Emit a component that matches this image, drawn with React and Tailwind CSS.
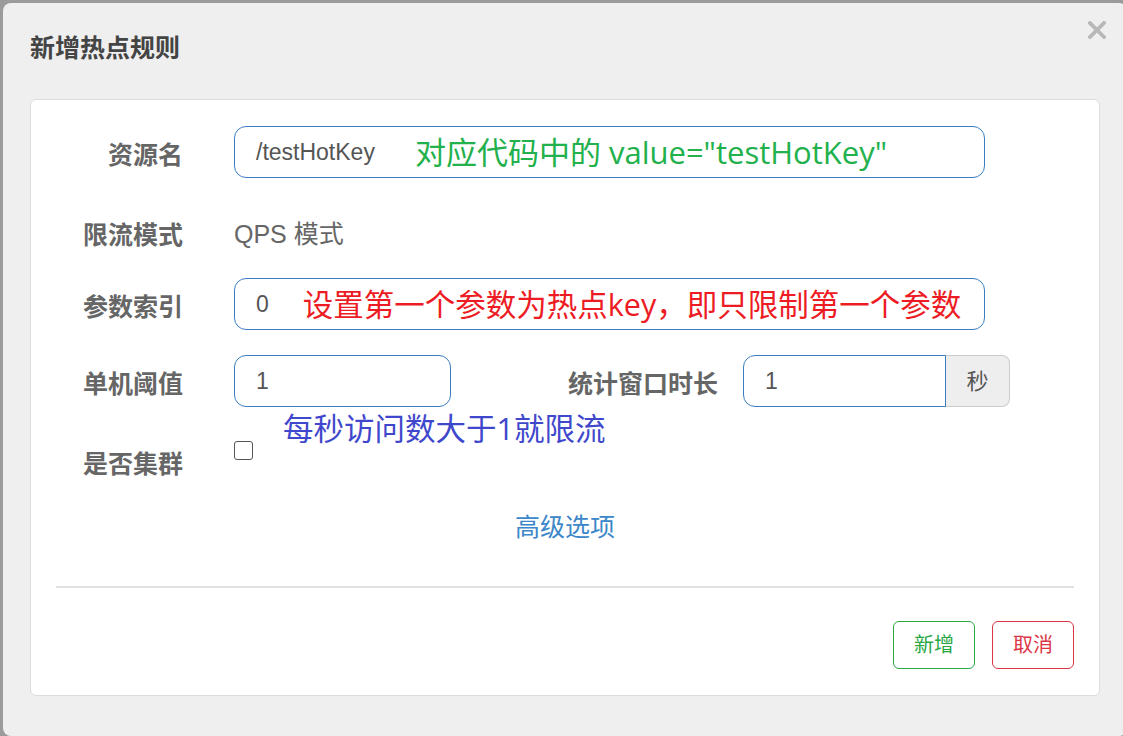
import React from 'react';

const cjk = { fontFamily: '"Liberation Sans", "Noto Sans CJK SC", sans-serif' };
const note = { fontFamily: '"Open Sans", "Noto Sans CJK SC", sans-serif' };

const Label = ({ children, className = '' }) => (
  <div className={`w-[152px] shrink-0 text-right text-[25px] font-bold text-[#666] leading-[32px] ${className}`}>
    {children}
  </div>
);

const Field = ({ value, children, className = '' }) => (
  <div className={`h-[52px] flex items-center border border-[#3a7dc0] rounded-[12px] bg-white pl-[21px] ${className}`}>
    <span className="text-[23px] text-[#555]">{value}</span>
    {children}
  </div>
);

const App = () => {
  return (
    <div className="h-[736px] w-[1123px] overflow-hidden bg-[#9b9b9b] pt-[3px] pl-[3px]" style={cjk}>
      <div className="h-[733px] w-[1124px] rounded-lg bg-[#efefef]">
        <div className="h-[96px] flex justify-between items-start pl-[27px] pr-[21px]">
          <h4 className="pt-[29px] text-[25px] leading-[32px] font-bold text-[#444]">新增热点规则</h4>
          <button className="mt-[18px] w-[18px] h-[18px] text-[#b8b8b8]">
            <svg viewBox="0 0 18 18" width="18" height="18">
              <path d="M2 2 L16 16 M16 2 L2 16" stroke="currentColor" strokeWidth="3.8" strokeLinecap="square" />
            </svg>
          </button>
        </div>

        <div className="ml-[27px] w-[1070px] h-[597px] bg-white border border-[#dcdcdc] rounded-md pt-[26px] flex flex-col">
          {/* 资源名 */}
          <div className="flex items-center h-[52px]">
            <Label className="pt-[6px]">资源名</Label>
            <Field value="/testHotKey" className="ml-[51px] w-[751px]">
              <span className="ml-[40px] text-[31px] text-[#22b14c] leading-none" style={note}>
                对应代码中的 value="testHotKey"
              </span>
            </Field>
          </div>

          {/* 限流模式 */}
          <div className="flex items-center h-[52px] mt-[31px]">
            <Label>限流模式</Label>
            <div className="ml-[51px] text-[25px] text-[#666]">QPS 模式</div>
          </div>

          {/* 参数索引 */}
          <div className="flex items-center h-[52px] mt-[17px]">
            <Label className="pt-[6px]">参数索引</Label>
            <Field value="0" className="ml-[51px] w-[751px]">
              <span className="ml-[34px] text-[30.5px] text-[#ed1c24] leading-none" style={note}>
                设置第一个参数为热点key，即只限制第一个参数
              </span>
            </Field>
          </div>

          {/* 单机阈值 / 统计窗口时长 */}
          <div className="flex items-center h-[52px] mt-[25px]">
            <Label className="pt-[6px]">单机阈值</Label>
            <Field value="1" className="ml-[51px] w-[217px]" />
            <div className="ml-[116px] w-[151px] text-right text-[25px] font-bold text-[#666] leading-[32px] pt-[6px]">
              统计窗口时长
            </div>
            <div className="ml-[25px] flex h-[52px]">
              <div className="w-[203px] h-full flex items-center border border-[#3a7dc0] rounded-l-[12px] pl-[21px] text-[23px] text-[#555]">
                1
              </div>
              <div className="w-[64px] h-full flex items-center justify-center bg-[#eeeeee] border border-l-0 border-[#cccccc] rounded-r-[8px] text-[22px] text-[#555]">
                秒
              </div>
            </div>
          </div>

          {/* 是否集群 */}
          <div className="relative flex items-start h-[52px] mt-[25px]">
            <span className="absolute left-[252px] top-[-20px] text-[30.5px] leading-[32px] text-[#3f48cc] whitespace-nowrap" style={note}>
              每秒访问数大于1就限流
            </span>
            <Label className="pt-[16px]">是否集群</Label>
            <div className="ml-[51px] mt-[9px] w-[19px] h-[19px] border-[1.5px] border-[#555] rounded-[3px] bg-white" />
          </div>

          <div className="mt-[27px] text-center text-[25px] leading-[32px] text-[#3b87c9]">高级选项</div>

          <div className="mt-[43px] mx-[25px] h-[2px] bg-[#e2e2e2]" />

          <div className="mt-[33px] mr-[25px] flex justify-end gap-[17px]">
            <button className="w-[82px] h-[48px] border border-[#28a745] rounded-[6px] text-[20px] text-[#28a745] bg-white">新增</button>
            <button className="w-[82px] h-[48px] border border-[#dc3545] rounded-[6px] text-[20px] text-[#dc3545] bg-white">取消</button>
          </div>
        </div>
      </div>
    </div>
  );
};

export default App;
